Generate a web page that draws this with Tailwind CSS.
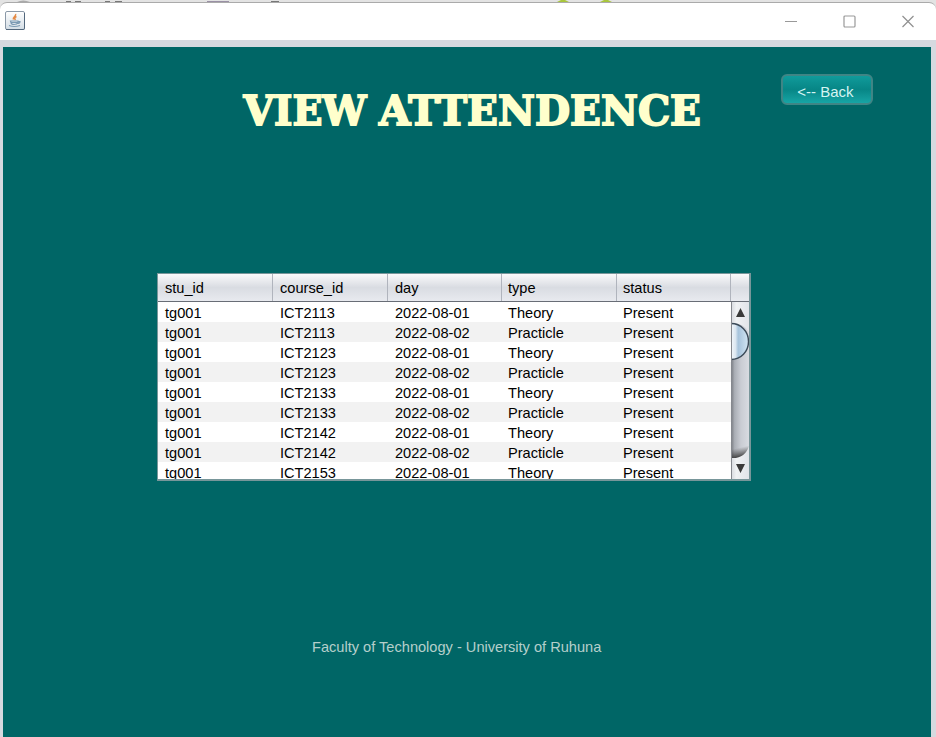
<!DOCTYPE html>
<html lang="en">
<head>
<meta charset="utf-8">
<title>View Attendence</title>
<script src="https://cdn.jsdelivr.net/npm/@tailwindcss/browser@4"></script>
</head>
<body class="w-[936px] h-[737px] overflow-hidden flex flex-col bg-[#e3e3e3] font-['Liberation_Sans',Arial,sans-serif] text-[14.6px]">
  <svg class="block h-[2px] w-full shrink-0" viewBox="0 0 936 2">
    <path d="M17 2q6-3 13 0z" fill="#aaa"/>
    <path d="M66 1h5v1h-5zM75 1h6v1h-6zM105 1h5v1h-5zM115 1h7v1h-7zM271 1h8v1h-8z" fill="#777"/>
    <rect x="207" y="1" width="22" height="1" fill="#9a90a5"/>
    <path d="M557 2l4-2h4l4 2zM600 2l4-2h4l4 2z" fill="#a9c63c"/>
  </svg>
  <header class="h-[38px] shrink-0 bg-white border-t border-[#aaa] rounded-t-[7px] flex items-center justify-between pl-[5px] pr-[22px]">
    <svg class="w-5 h-[19px] mt-[-2px]" viewBox="0 0 20 19">
      <defs><linearGradient id="app" x2="0" y2="1"><stop stop-color="#fff"/><stop offset="1" stop-color="#d3dde5"/></linearGradient></defs>
      <rect x=".5" y=".5" width="19" height="18" rx="1.5" fill="url(#app)" stroke="#8b99a8"/>
      <path d="M1 18.5h17.500q1 0 1-1V2" fill="none" stroke="#52677c"/>
      <path d="M10.500 3C12 5 7 6 8.500 8.500M11.500 5.500Q8.500 7 10.500 9" fill="none" stroke="#e48a45" stroke-width="1.500"/>
      <path d="M5.500 10H13v1.500q-1 2-4 2t-3-2zM13 10.500h2q0 2-3 2M4 14.500q5 2 11 0" fill="none" stroke="#7b9ab3" stroke-width="1.200"/>
      <path d="M6 11.500h7" stroke="#7b9ab3"/>
    </svg>
    <div class="flex items-center gap-[46px] mt-[-1px]">
      <svg class="w-[12px] h-[13px]" viewBox="0 0 12 13"><path d="M0 6.500h12" stroke="#999"/></svg>
      <svg class="w-[13px] h-[13px]" viewBox="0 0 13 13"><rect x="1" y="1" width="11" height="11" rx="1" fill="none" stroke="#999" stroke-width="1.200"/></svg>
      <svg class="w-[12px] h-[13px]" viewBox="0 0 12 13"><path d="M.5 1l11 11M11.500 1l-11 11" stroke="#909090" stroke-width="1.200"/></svg>
    </div>
  </header>
  <div class="flex-1 min-h-0 bg-[#d6d9df] pt-[7px] pl-[3px] pr-[5px]">
    <main class="h-full bg-[#006666] flex flex-col">
      <div class="flex items-start pt-[27px] pl-[237px] h-[226px] shrink-0">
        <svg class="block w-[466px] h-[60px] shrink-0 overflow-visible" viewBox="0 0 466 60" role="heading">
          <g font-family="'DejaVu Serif', serif" font-weight="700" font-size="41" fill="#ffffcc" stroke="#ffffcc" stroke-width="1.800">
            <text x="3.500" y="51" textLength="123" lengthAdjust="spacingAndGlyphs">VIEW</text>
            <text x="139" y="51" textLength="322" lengthAdjust="spacingAndGlyphs">ATTENDENCE</text>
          </g>
        </svg>
        <button class="ml-[75px] h-[31px] w-[92px] shrink-0 rounded-[6px] border-2 border-[#3f8585] bg-linear-to-b from-[#109b9b] via-[#078686] to-[#17a5a5] text-[15px] text-[#d5f5f3] pt-[3px] pr-[3px] leading-none">&lt;-- Back</button>
      </div>
      <section class="ml-[154px] w-[594px] h-[208px] shrink-0 border border-[#78969a] border-r-2 border-b-2 bg-white flex flex-col overflow-hidden">
        <div class="h-[28px] shrink-0 flex border-b border-[#686d76] bg-linear-to-b from-[#fafafb] via-[#d9dce2] to-[#e8eaef] leading-[28px]">
          <div class="w-[115px] pl-[7px] border-r border-[#b0b4bd]">stu_id</div>
          <div class="w-[115px] pl-[7px] border-r border-[#b0b4bd]">course_id</div>
          <div class="w-[114px] pl-[7px] border-r border-[#b0b4bd]">day</div>
          <div class="w-[115px] pl-[6px] border-r border-[#b0b4bd]">type</div>
          <div class="w-[114px] pl-[6px] border-r border-[#b0b4bd]">status</div>
        </div>
        <div class="flex flex-1 min-h-0">
          <div id="rows" class="w-[573px] h-full overflow-hidden leading-[22px]"></div>
          <svg class="block w-[18px] h-[177px] shrink-0" viewBox="0 0 18 177">
            <defs>
              <linearGradient id="track"><stop stop-color="#75787e"/><stop offset=".2" stop-color="#aaaeb5"/><stop offset=".55" stop-color="#c9ccd3"/><stop offset="1" stop-color="#d8dbe1"/></linearGradient>
              <linearGradient id="thumb"><stop stop-color="#f3f7fb"/><stop offset=".25" stop-color="#dce7f1"/><stop offset=".4" stop-color="#a6c3dc"/><stop offset="1" stop-color="#d5e7f4"/></linearGradient>
              <linearGradient id="end" x2="0.300" y2="1"><stop offset=".3" stop-color="#444" stop-opacity="0"/><stop offset="1" stop-color="#333"/></linearGradient>
              <linearGradient id="arrow"><stop stop-color="#d5d8dd"/><stop offset=".3" stop-color="#f0f2f4"/><stop offset="1" stop-color="#e1e4e9"/></linearGradient>
            </defs>
            <path d="M0 0h18v177H0z" fill="url(#track)"/>
            <path d="M0 143h18v14H0z" fill="url(#end)"/>
            <path d="M0 0h18v30Q13 21 0 21z" fill="url(#arrow)"/>
            <path d="M0 156Q14 157 18 144v33H0z" fill="url(#arrow)"/>
            <path d="M0 21.500c10 0 18 8 18 18s-8 18-18 18z" fill="url(#thumb)"/>
            <path d="M0 21.500c10 0 17.500 8 17.500 18s-7.500 18-17.500 18" fill="none" stroke="#3b4a58" stroke-width="1.400"/>
            <path d="M9.500 6l4.500 9H5zM5 162h9l-4.500 9z" fill="#3a3a3a"/>
            <path d="M.5 0v177" stroke="#85888e"/>
          </svg>
        </div>
      </section>
      <footer class="mt-[156px] pl-[309px] leading-[20px] text-[#b5cfcb]">Faculty of Technology - University of Ruhuna</footer>
    </main>
  </div>
<script>
  const courses = ['ICT2113', 'ICT2123', 'ICT2133', 'ICT2142', 'ICT2153'];
  const rows = [];
  courses.forEach(c => rows.push([c, '2022-08-01', 'Theory'], [c, '2022-08-02', 'Practicle']));
  document.getElementById('rows').innerHTML = rows.slice(0, 9).map(([c, d, t]) =>
    `<div class="h-[20px] flex text-black odd:bg-white even:bg-[#f2f2f2]"><span class="w-[115px] pl-[7px]">tg001</span><span class="w-[115px] pl-[7px]">${c}</span><span class="w-[114px] pl-[7px]">${d}</span><span class="w-[115px] pl-[6px]">${t}</span><span class="pl-[6px]">Present</span></div>`).join('');
</script>
</body>
</html>
